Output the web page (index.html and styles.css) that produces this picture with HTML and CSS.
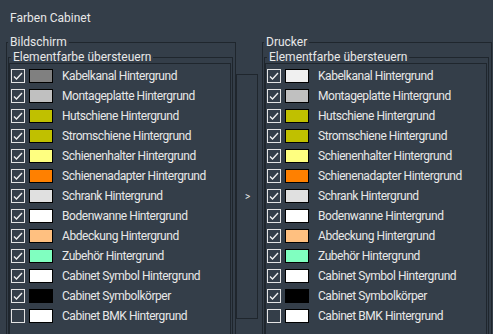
FILE: index.html
```html
<!DOCTYPE html>
<html>

<head>
    <meta charset="UTF-8">
    <title>Farben Cabinet</title>
    <link rel="stylesheet" href="styles.css">
</head>

<body>
    <div class="page">
        <h1 class="title">Farben Cabinet</h1>
        <div class="columns">
            <!-- Bildschirm -->
            <fieldset class="group">
                <legend>Bildschirm</legend>
                <fieldset class="sub">
                    <legend>Elementfarbe übersteuern</legend>
                    <ul class="list">
                        <li><span class="check"><svg viewBox="0 0 12 12"><polyline points="2,6.5 4.5,9 10,3" /></svg></span><span class="swatch gray"></span>Kabelkanal Hintergrund</li>
                        <li><span class="check"><svg viewBox="0 0 12 12"><polyline points="2,6.5 4.5,9 10,3" /></svg></span><span class="swatch silver"></span>Montageplatte Hintergrund</li>
                        <li><span class="check"><svg viewBox="0 0 12 12"><polyline points="2,6.5 4.5,9 10,3" /></svg></span><span class="swatch olive"></span>Hutschiene Hintergrund</li>
                        <li><span class="check"><svg viewBox="0 0 12 12"><polyline points="2,6.5 4.5,9 10,3" /></svg></span><span class="swatch olive"></span>Stromschiene Hintergrund</li>
                        <li><span class="check"><svg viewBox="0 0 12 12"><polyline points="2,6.5 4.5,9 10,3" /></svg></span><span class="swatch lemon"></span>Schienenhalter Hintergrund</li>
                        <li><span class="check"><svg viewBox="0 0 12 12"><polyline points="2,6.5 4.5,9 10,3" /></svg></span><span class="swatch orange"></span>Schienenadapter Hintergrund</li>
                        <li><span class="check"><svg viewBox="0 0 12 12"><polyline points="2,6.5 4.5,9 10,3" /></svg></span><span class="swatch light"></span>Schrank Hintergrund</li>
                        <li><span class="check"><svg viewBox="0 0 12 12"><polyline points="2,6.5 4.5,9 10,3" /></svg></span><span class="swatch white"></span>Bodenwanne Hintergrund</li>
                        <li><span class="check"><svg viewBox="0 0 12 12"><polyline points="2,6.5 4.5,9 10,3" /></svg></span><span class="swatch peach"></span>Abdeckung Hintergrund</li>
                        <li><span class="check"><svg viewBox="0 0 12 12"><polyline points="2,6.5 4.5,9 10,3" /></svg></span><span class="swatch mint"></span>Zubehör Hintergrund</li>
                        <li><span class="check"><svg viewBox="0 0 12 12"><polyline points="2,6.5 4.5,9 10,3" /></svg></span><span class="swatch white"></span>Cabinet Symbol Hintergrund</li>
                        <li><span class="check"><svg viewBox="0 0 12 12"><polyline points="2,6.5 4.5,9 10,3" /></svg></span><span class="swatch black"></span>Cabinet Symbolkörper</li>
                        <li><span class="check"></span><span class="swatch white"></span>Cabinet BMK Hintergrund</li>
                    </ul>
                </fieldset>
            </fieldset>

            <div class="middle">
                <div class="copy">&gt;</div>
            </div>

            <!-- Drucker -->
            <fieldset class="group">
                <legend>Drucker</legend>
                <fieldset class="sub">
                    <legend>Elementfarbe übersteuern</legend>
                    <ul class="list">
                        <li><span class="check"><svg viewBox="0 0 12 12"><polyline points="2,6.5 4.5,9 10,3" /></svg></span><span class="swatch snow"></span>Kabelkanal Hintergrund</li>
                        <li><span class="check"><svg viewBox="0 0 12 12"><polyline points="2,6.5 4.5,9 10,3" /></svg></span><span class="swatch silver"></span>Montageplatte Hintergrund</li>
                        <li><span class="check"><svg viewBox="0 0 12 12"><polyline points="2,6.5 4.5,9 10,3" /></svg></span><span class="swatch olive"></span>Hutschiene Hintergrund</li>
                        <li><span class="check"><svg viewBox="0 0 12 12"><polyline points="2,6.5 4.5,9 10,3" /></svg></span><span class="swatch olive"></span>Stromschiene Hintergrund</li>
                        <li><span class="check"><svg viewBox="0 0 12 12"><polyline points="2,6.5 4.5,9 10,3" /></svg></span><span class="swatch lemon"></span>Schienenhalter Hintergrund</li>
                        <li><span class="check"><svg viewBox="0 0 12 12"><polyline points="2,6.5 4.5,9 10,3" /></svg></span><span class="swatch orange"></span>Schienenadapter Hintergrund</li>
                        <li><span class="check"><svg viewBox="0 0 12 12"><polyline points="2,6.5 4.5,9 10,3" /></svg></span><span class="swatch light"></span>Schrank Hintergrund</li>
                        <li><span class="check"><svg viewBox="0 0 12 12"><polyline points="2,6.5 4.5,9 10,3" /></svg></span><span class="swatch white"></span>Bodenwanne Hintergrund</li>
                        <li><span class="check"><svg viewBox="0 0 12 12"><polyline points="2,6.5 4.5,9 10,3" /></svg></span><span class="swatch peach"></span>Abdeckung Hintergrund</li>
                        <li><span class="check"><svg viewBox="0 0 12 12"><polyline points="2,6.5 4.5,9 10,3" /></svg></span><span class="swatch mint"></span>Zubehör Hintergrund</li>
                        <li><span class="check"><svg viewBox="0 0 12 12"><polyline points="2,6.5 4.5,9 10,3" /></svg></span><span class="swatch white"></span>Cabinet Symbol Hintergrund</li>
                        <li><span class="check"><svg viewBox="0 0 12 12"><polyline points="2,6.5 4.5,9 10,3" /></svg></span><span class="swatch black"></span>Cabinet Symbolkörper</li>
                        <li><span class="check"></span><span class="swatch white"></span>Cabinet BMK Hintergrund</li>
                    </ul>
                </fieldset>
            </fieldset>
        </div>
    </div>
</body>

</html>
```

FILE: styles.css
```css
* {
    padding: 0;
    margin: 0;
    box-sizing: border-box;
}

html,
body {
    height: 334px;
    overflow: hidden;
}

body {
    background: #343e49;
    color: #e8e8e8;
    font-family: Roboto, "Liberation Sans", sans-serif;
    font-size: 12px;
}

ul {
    list-style: none;
}

.page {
    padding: 11px 0 0 6px;
}

.title {
    font-size: 12px;
    font-weight: normal;
    line-height: 14px;
    margin: 0 0 10px 4px;
}

.columns {
    display: flex;
    align-items: flex-start;
}

.group {
    width: 230px;
    min-width: 0;
    border: 1px solid #1f262d;
    padding: 2px 2px 0 1px;
}

.group > legend {
    line-height: 14px;
    padding: 0 2px;
}

.sub {
    min-width: 0;
    border: 1px solid #1f262d;
    padding: 0 1px 0 0;
}

.sub > legend {
    line-height: 12px;
    padding: 0 2px;
    margin-left: 2px;
}

.list {
    border: 1px solid #1f262d;
    padding: 2px 0 30px 1px;
}

.list li {
    display: flex;
    align-items: center;
    height: 20px;
    white-space: nowrap;
    letter-spacing: -0.45px;
}

/* checkbox */
.check {
    width: 14px;
    height: 14px;
    border: 1px solid #e4e4e4;
    margin-right: 4px;
}

.check svg {
    display: block;
    width: 12px;
    height: 12px;
    fill: none;
    stroke: #f2f2f2;
    stroke-width: 1.3;
}

.swatch {
    width: 24px;
    height: 14px;
    border: 1px solid #000;
    margin-right: 9px;
}

.gray { background: #808080; }
.silver { background: #c0c0c0; }
.olive { background: #c0c000; }
.lemon { background: #ffff80; }
.orange { background: #ff8000; }
.light { background: #e0e0e0; }
.white { background: #ffffff; }
.snow { background: #f0f0f0; }
.peach { background: #ffc080; }
.mint { background: #80ffc0; }
.black { background: #000000; }

.middle {
    width: 26px;
    padding-top: 39px;
}

.copy {
    width: 22px;
    height: 245px;
    border: 1px solid #1f262d;
    display: flex;
    align-items: center;
    justify-content: center;
    font-size: 10px;
    padding-left: 1px;
}
```
